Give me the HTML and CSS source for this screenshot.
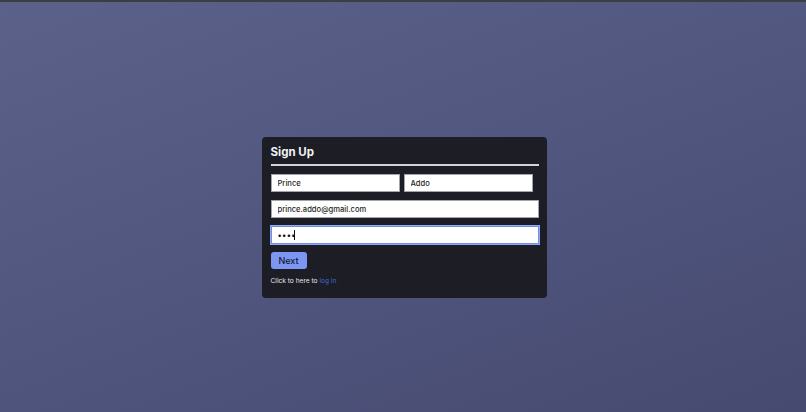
FILE: index.html
```html
<!DOCTYPE html>
<html lang="en">
<head>
<meta charset="utf-8">
<title>Sign Up</title>
<link rel="stylesheet" href="styles.css">
</head>
<body>
<div class="page">
  <form class="card">
    <h2 class="title">Sign Up</h2>
    <div class="rule"></div>
    <div class="row">
      <input class="field half" type="text" value="Prince">
      <input class="field half" type="text" value="Addo">
    </div>
    <input class="field full" type="email" value="prince.addo@gmail.com">
    <span class="pw-wrap">
      <input class="field full focused" type="password" value="abcd">
      <span class="caret"></span>
    </span>
    <button class="btn" type="button">Next</button>
    <p class="note">Click to here to <a href="#" class="link">log in</a></p>
  </form>
</div>
</body>
</html>
```
FILE: styles.css
```css
html, body {
  margin: 0;
  padding: 0;
  height: 100%;
}
body {
  font-family: Inter, "Noto Sans", sans-serif;
  background: linear-gradient(160deg, #5b6189 0%, #51567e 50%, #464a71 100%);
  border-top: 2px solid #3b3e42;
  box-sizing: border-box;
}
.page {
  display: flex;
  justify-content: center;
  padding-top: 135px;
}
.card {
  width: 285px;
  box-sizing: border-box;
  background: #1c1d25;
  border-radius: 4px;
  padding: 8px 8px 12px 9px;
  display: flex;
  flex-direction: column;
  align-items: flex-start;
  margin-left: 2px;
}
.title {
  margin: 0;
  font-size: 11.5px;
  font-weight: 700;
  line-height: 15px;
  color: #f2f2f4;
}
.rule {
  align-self: stretch;
  height: 2px;
  background: #d4d4d8;
  margin-top: 4px;
}
.row {
  display: flex;
  gap: 4px;
  margin-top: 8px;
}
.field {
  box-sizing: border-box;
  height: 18px;
  margin: 0;
  border: 1px solid #a4a4ac;
  background: #ffffff;
  font-family: Inter, "Noto Sans", sans-serif;
  font-size: 7.6px;
  font-weight: 500;
  color: #1f1f24;
  padding: 0 6px;
  outline: none;
  border-radius: 0;
}
.half { width: 129px; }
.full { width: 268px; margin-top: 8px; }
.pw-wrap {
  position: relative;
  display: block;
}
.focused {
  border: 1px solid #6f8fe6;
  box-shadow: 0 0 0 1px #93aaf0;
  font-size: 8px;
  letter-spacing: 0.3px;
  color: #111;
}
.caret {
  position: absolute;
  left: 23px;
  top: 12px;
  width: 1px;
  height: 10px;
  background: #111;
}
.btn {
  margin-top: 8px;
  width: 36px;
  height: 17px;
  padding: 0;
  border: none;
  border-radius: 3px;
  background: #7b97f2;
  color: #141a33;
  font-family: Inter, "Noto Sans", sans-serif;
  font-size: 9px;
  font-weight: 500;
  line-height: 17px;
}
.note {
  margin: 8px 0 0 0;
  font-size: 6.6px;
  line-height: 9px;
  color: #e6e6ea;
}
.link {
  color: #4566dc;
  text-decoration: none;
}
```
